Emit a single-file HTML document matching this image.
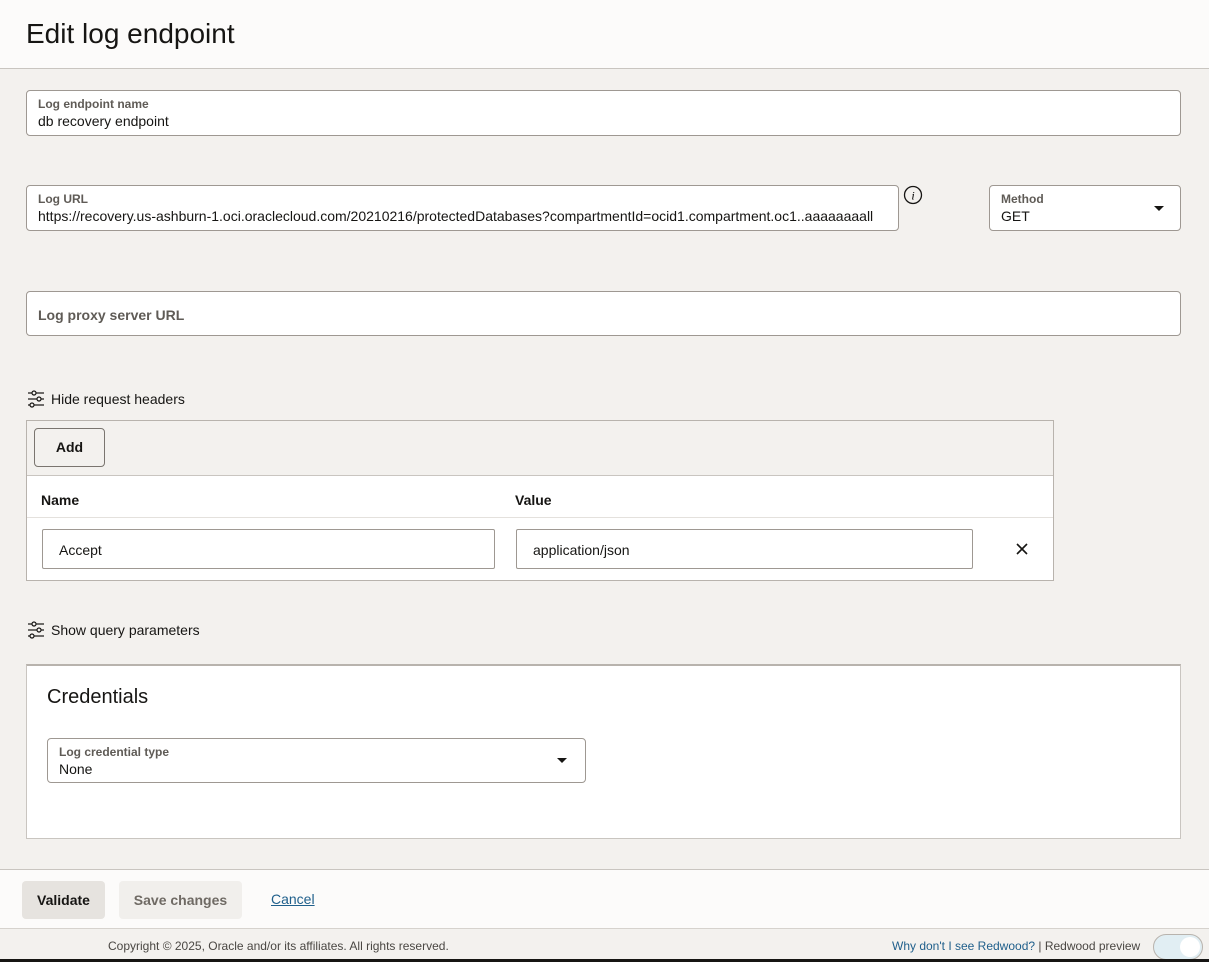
<!DOCTYPE html><html><head><style>
*{box-sizing:border-box;margin:0;padding:0}
body{width:1209px;height:962px;overflow:hidden;background:#f3f1ee;font-family:"Liberation Sans",sans-serif;color:#161513;position:relative}
.abs{position:absolute}
.hdr{left:0;top:0;width:1209px;height:69px;background:#fcfbfa;border-bottom:1px solid #c9c5c0}
.hdr h1{position:absolute;left:26px;top:18px;font-size:28px;font-weight:normal}
.fld{background:#fff;border:1px solid #9e9892;border-radius:4px}
.lbl{position:absolute;left:11px;top:6px;font-size:12px;font-weight:bold;color:#5f5b56}
.val{position:absolute;left:11px;top:22px;font-size:14px;white-space:nowrap;overflow:hidden}
.tri{position:absolute;width:0;height:0;border-left:5px solid transparent;border-right:5px solid transparent;border-top:5px solid #161513}
.tog{font-size:14px;display:flex;align-items:center;gap:6px}
</style></head><body>
<div class="abs hdr"><h1>Edit log endpoint</h1></div>
<div class="abs fld" style="left:26px;top:90px;width:1155px;height:46px"><div class="lbl">Log endpoint name</div><div class="val">db recovery endpoint</div></div>
<div class="abs fld" style="left:26px;top:185px;width:873px;height:46px"><div class="lbl">Log URL</div><div class="val" style="right:8px">https://recovery.us-ashburn-1.oci.oraclecloud.com/20210216/protectedDatabases?compartmentId=ocid1.compartment.oc1..aaaaaaaall</div></div>
<svg class="abs" style="left:903px;top:185px" width="20" height="20"><circle cx="10" cy="10" r="8.5" fill="none" stroke="#161513" stroke-width="1.3"/><text x="10" y="14.5" font-size="12" font-style="italic" text-anchor="middle" font-family="Liberation Serif">i</text></svg>
<div class="abs fld" style="left:989px;top:185px;width:192px;height:46px"><div class="lbl">Method</div><div class="val">GET</div><div class="tri" style="left:164px;top:20px"></div></div>
<div class="abs fld" style="left:26px;top:291px;width:1155px;height:45px"><div class="lbl" style="top:15px;font-size:14px">Log proxy server URL</div></div>
<svg class="abs" width="0" height="0"><defs><g id="sl" stroke="#161513" stroke-width="1.2" fill="none"><line x1="1" y1="3" x2="5" y2="3"/><circle cx="7" cy="3" r="2"/><line x1="9" y1="3" x2="17" y2="3"/><line x1="1" y1="9" x2="10" y2="9"/><circle cx="12" cy="9" r="2"/><line x1="14" y1="9" x2="17" y2="9"/><line x1="1" y1="15" x2="3" y2="15"/><circle cx="5" cy="15" r="2"/><line x1="7" y1="15" x2="17" y2="15"/></g></defs></svg>
<div class="abs tog" style="left:27px;top:390px"><svg width="18" height="18"><use href="#sl"/></svg>Hide request headers</div>
<div class="abs" style="left:26px;top:420px;width:1028px;height:161px;border:1px solid #b8b3ad;background:#fff">
 <div style="height:55px;background:#f3f1ee;border-bottom:1px solid #c9c5c0;position:relative">
  <div class="abs" style="left:7px;top:7px;width:71px;height:39px;border:1px solid #7a756f;border-radius:4px;font-weight:bold;font-size:14px;text-align:center;line-height:37px">Add</div></div>
 <div style="height:42px;border-bottom:1px solid #e4e1dd;position:relative;font-weight:bold;font-size:14px"><span class="abs" style="left:14px;top:16px">Name</span><span class="abs" style="left:488px;top:16px">Value</span></div>
 <div class="abs fld" style="left:15px;top:108px;width:453px;height:40px;border-radius:2px"><span class="abs" style="left:16px;top:12px;font-size:14px">Accept</span></div>
 <div class="abs fld" style="left:489px;top:108px;width:457px;height:40px;border-radius:2px"><span class="abs" style="left:16px;top:12px;font-size:14px">application/json</span></div>
 <svg class="abs" style="left:989px;top:122px" width="12" height="12"><path d="M1 1L11 11M11 1L1 11" stroke="#161513" stroke-width="1.6"/></svg>
</div>
<div class="abs tog" style="left:27px;top:621px"><svg width="18" height="18"><use href="#sl"/></svg>Show query parameters</div>
<div class="abs" style="left:26px;top:664px;width:1155px;height:175px;background:#fff;border:1px solid #c9c5c0;border-top:2px solid #b8b3ad">
 <div class="abs" style="left:20px;top:20px;font-size:20px">Credentials</div>
 <div class="abs fld" style="left:20px;top:72px;width:539px;height:45px"><div class="lbl">Log credential type</div><div class="val">None</div><div class="tri" style="left:509px;top:19px"></div></div>
</div>
<div class="abs" style="left:0;top:869px;width:1209px;height:60px;background:#fcfbfa;border-top:1px solid #c9c5c0;border-bottom:1px solid #d6d2cd">
 <div class="abs" style="left:22px;top:11px;width:83px;height:38px;background:#e6e3df;border-radius:4px;font-weight:bold;font-size:14px;text-align:center;line-height:38px">Validate</div>
 <div class="abs" style="left:119px;top:11px;width:123px;height:38px;background:#f1efec;border-radius:4px;font-weight:bold;font-size:14px;text-align:center;line-height:38px;color:#6f6a64">Save changes</div>
 <div class="abs" style="left:271px;top:21px;font-size:14px;color:#1f5f8b;text-decoration:underline">Cancel</div>
</div>
<div class="abs" style="left:108px;top:939px;font-size:12px;color:#4a4743">Copyright © 2025, Oracle and/or its affiliates. All rights reserved.</div>
<div class="abs" style="left:892px;top:939px;font-size:12px;color:#4a4743"><span style="color:#1f5f8b">Why don't I see Redwood?</span> | Redwood preview</div>
<div class="abs" style="left:1153px;top:934px;width:50px;height:26px;border-radius:13px;background:#e1eef3;border:1px solid #b8b3ad"><div class="abs" style="right:2px;top:2px;width:20px;height:20px;border-radius:50%;background:#fff"></div></div>
<div class="abs" style="left:0;top:959px;width:1209px;height:3px;background:#161513"></div>
</body></html>
